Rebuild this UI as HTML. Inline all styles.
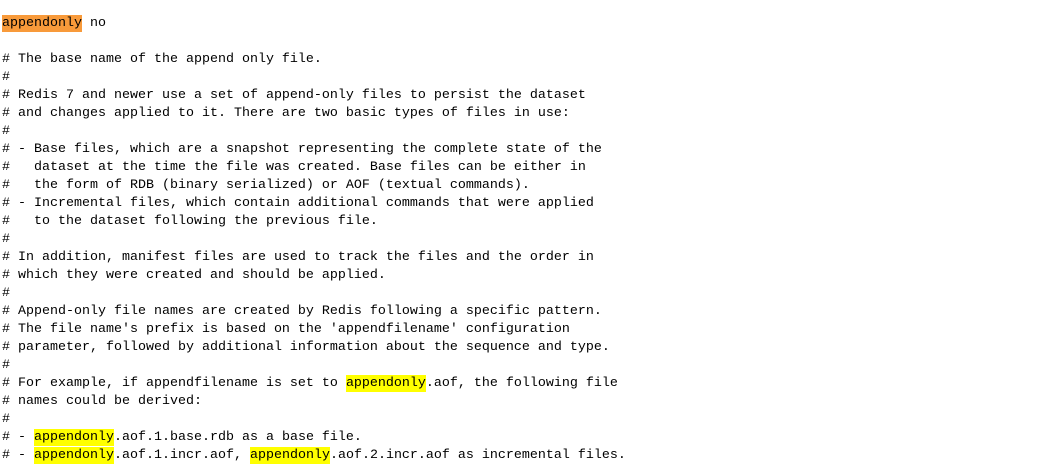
<!DOCTYPE html>
<html><head><style>
body{margin:0;background:#fff;width:1060px;height:463px;overflow:hidden}
pre{margin:0;position:absolute;left:2px;top:15px;font-family:"Liberation Mono","Noto Sans CJK SC",monospace;font-size:13.33px;line-height:18px;color:#000}
.o{background:#f89a3a;padding:1px 0}
.y{background:#ffff00;padding:1px 0}
</style></head><body><pre><span class="o">appendonly</span> no

# The base name of the append only file.
#
# Redis 7 and newer use a set of append-only files to persist the dataset
# and changes applied to it. There are two basic types of files in use:
#
# - Base files, which are a snapshot representing the complete state of the
#   dataset at the time the file was created. Base files can be either in
#   the form of RDB (binary serialized) or AOF (textual commands).
# - Incremental files, which contain additional commands that were applied
#   to the dataset following the previous file.
#
# In addition, manifest files are used to track the files and the order in
# which they were created and should be applied.
#
# Append-only file names are created by Redis following a specific pattern.
# The file name's prefix is based on the 'appendfilename' configuration
# parameter, followed by additional information about the sequence and type.
#
# For example, if appendfilename is set to <span class="y">appendonly</span>.aof, the following file
# names could be derived:
#
# - <span class="y">appendonly</span>.aof.1.base.rdb as a base file.
# - <span class="y">appendonly</span>.aof.1.incr.aof, <span class="y">appendonly</span>.aof.2.incr.aof as incremental files.</pre></body></html>
